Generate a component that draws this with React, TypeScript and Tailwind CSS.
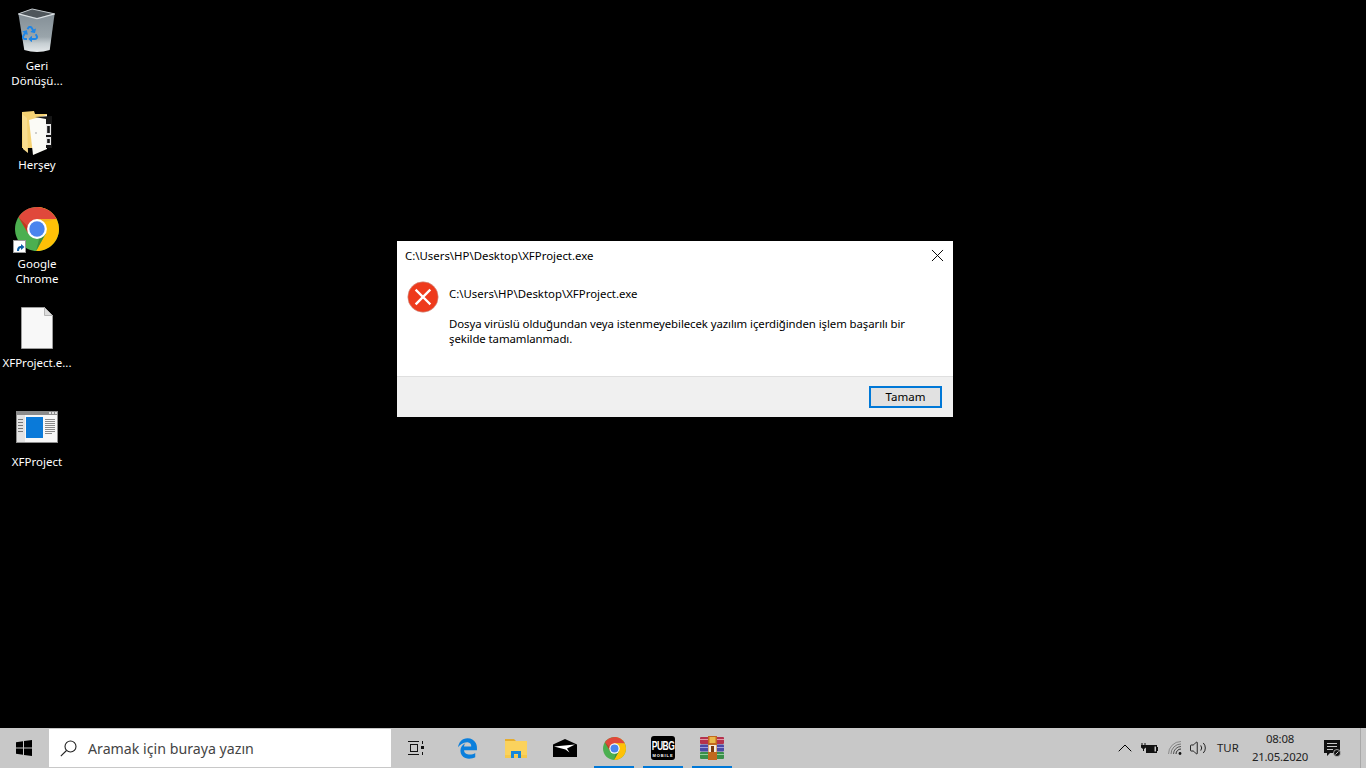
import React from "react";
import { FaRecycle } from "react-icons/fa";
import { FaEdgeLegacy } from "react-icons/fa6";
import { ChevronUp, Volume2, X } from "lucide-react";

const font = "font-['Noto_Sans','Liberation_Sans',sans-serif]";

function RecycleBin() {
  return (
    <div className="relative w-[40px] h-[45px] -mt-[1px]">
      <svg viewBox="0 0 40 46" className="absolute inset-0 w-full h-full">
        <defs>
          <linearGradient id="bin" x1="0" y1="0" x2="0" y2="1">
            <stop offset="0" stopColor="#7f8a92" />
            <stop offset="0.65" stopColor="#9aa5ab" />
            <stop offset="0.8" stopColor="#c6ced2" />
            <stop offset="1" stopColor="#e4e8ea" />
          </linearGradient>
        </defs>
        <path d="M1 6 L15 1 L38 6 L33 43 Q20 47 7 43 Z" fill="url(#bin)" />
        <path d="M1 6 L15 1 L38 6 L20 10 Z" fill="#4f565b" />
        <path d="M1 6 L20 11 L38 6" fill="none" stroke="#dfe4e7" strokeWidth="1.2" />
        <path d="M1 6 L15 1 L38 6" fill="none" stroke="#c3c9cd" strokeWidth="1" />
      </svg>
      <FaRecycle className="absolute left-[5px] top-[18px] text-[#1f86e6]" size={16} />
    </div>
  );
}

function FolderIcon() {
  return (
    <svg viewBox="0 0 32 46" className="w-[32px] h-[46px]">
      <path d="M1 2 L13 1 L14 4 L26 4 L26 38 L1 38 Z" fill="#f5d273" />
      <path d="M1 4 L6 8 L7 43 L2 39 Z" fill="#f9dd8f" />
      <path d="M8 10 L26 5 L26 39 L12 45 Z" fill="#fbfbf6" />
      <path d="M14 7 L31 6 L31 38 L25 38 L25 9 Z" fill="#161616" />
      <rect x="25" y="14" width="5" height="11" fill="#e8e8e8" />
      <rect x="26.2" y="16" width="2.6" height="7" fill="#161616" />
      <rect x="25" y="27" width="5" height="8" fill="#e8e8e8" />
      <rect x="26.2" y="29" width="2.6" height="4" fill="#161616" />
      <circle cx="15" cy="23" r="0.8" fill="#999" />
    </svg>
  );
}

function ChromeIcon({ size }: { size: number }) {
  return (
    <svg viewBox="4 4 40 40" width={size} height={size}>
      <path fill="#4caf50" d="M44,24c0,11.045-8.955,20-20,20S4,35.045,4,24S12.955,4,24,4S44,12.955,44,24z" />
      <path fill="#ffc107" d="M24,4v20l8,4l-8.843,16c0.317,0,0.526,0,0.843,0c11.053,0,20-8.947,20-20S35.053,4,24,4z" />
      <path fill="#e0483b" d="M41.84,15H24v13l-3-1L7.16,13.26H7.14C10.68,7.69,16.91,4,24,4C31.8,4,38.55,8.48,41.84,15z" />
      <path fill="#c9341f" d="M7.158,13.264l8.843,14.862L21,27L7.158,13.264z" />
      <path fill="#3f8f3a" d="M23.157,44l8.934-16.059L28,25L23.157,44z" />
      <path fill="#f2b01e" d="M41.865,15H24l-1.579,4.58L41.865,15z" />
      <circle cx="24" cy="24" r="9" fill="#fff" />
      <circle cx="24" cy="24" r="7" fill="#4a84ee" />
    </svg>
  );
}

function ChromeDesktop() {
  return (
    <div className="relative w-[44px] h-[44px]">
      <ChromeIcon size={44} />
      <div className="absolute left-[-2px] bottom-[-2px] w-[13px] h-[13px] bg-white border border-[#9a9a9a] flex items-center justify-center">
        <svg viewBox="0 0 10 10" className="w-[10px] h-[10px]">
          <path d="M2 9 C2 5 4 4 6 4 L6 2 L9.5 5 L6 8 L6 6 C5 6 4 7 4 9 Z" fill="#0c5fa8" />
        </svg>
      </div>
    </div>
  );
}

function FileIcon() {
  return (
    <svg viewBox="0 0 32 42" className="w-[32px] h-[42px]">
      <path d="M0.5 0.5 H23.5 L31.5 8.5 V41.5 H0.5 Z" fill="#f8f8f8" stroke="#9d9d9d" />
      <path d="M23.5 0.5 V8.5 H31.5 Z" fill="#dcdcdc" stroke="#b5b5b5" />
    </svg>
  );
}

function ExeIcon() {
  return (
    <svg viewBox="0 0 42 32" className="w-[42px] h-[32px]">
      <rect x="0.5" y="0.5" width="41" height="31" fill="#f7f7f7" stroke="#8f8f8f" />
      <rect x="0" y="0" width="42" height="4" fill="#8b8b8b" />
      <rect x="33" y="1" width="2" height="2" fill="#ddd" />
      <rect x="36" y="1" width="2" height="2" fill="#ddd" />
      <rect x="39" y="1" width="2" height="2" fill="#ddd" />
      <rect x="1" y="4" width="8" height="27" fill="#e3e3e3" />
      <rect x="10" y="6" width="17" height="21" fill="#0a7ad9" />
      {[8, 11, 14, 17, 20].map((y) => (
        <rect key={y} x="2" y={y} width="5" height="1" fill="#777" />
      ))}
      {[8, 10, 12, 14, 16, 18, 20, 22].map((y) => (
        <rect key={y} x="29" y={y} width={y === 22 ? 7 : 10} height="1" fill="#8a8a8a" />
      ))}
    </svg>
  );
}

function DesktopItem({ label, icon, iconClass }: { label: React.ReactNode; icon: React.ReactNode; iconClass: string }) {
  return (
    <div className="h-[99px] w-[74px] flex flex-col items-center">
      <div className={`h-[49px] w-full flex justify-center ${iconClass}`}>{icon}</div>
      <div className="text-white text-[11.5px] leading-[15px] text-center whitespace-nowrap [text-shadow:0_1px_2px_#000]">{label}</div>
    </div>
  );
}

function ErrorIcon() {
  return (
    <svg viewBox="0 0 32 32" className="w-[32px] h-[32px]">
      <circle cx="16" cy="16" r="15.2" fill="#ee3a1c" stroke="#c9a198" strokeWidth="0.6" />
      <path d="M9.5 9.5 L22.5 22.5 M22.5 9.5 L9.5 22.5" stroke="#fff" strokeWidth="2.4" strokeLinecap="square" />
    </svg>
  );
}

function Dialog() {
  return (
    <div className="absolute left-[397px] top-[241px] w-[556px] h-[176px] bg-white flex flex-col text-[11.4px] leading-[15px] text-black">
      <div className="h-[29px] flex items-center justify-between pl-[8px] pr-[5px]">
        <span>C:\Users\HP\Desktop\XFProject.exe</span>
        <X size={21} strokeWidth={1.1} className="text-black" />
      </div>
      <div className="flex-1 flex pl-[10px] pt-[11px] gap-[10px]">
        <ErrorIcon />
        <div className="pt-[5px] whitespace-nowrap">
          <div>C:\Users\HP\Desktop\XFProject.exe</div>
          <div className="mt-[15px] tracking-[-0.08px]">
            Dosya virüslü olduğundan veya istenmeyebilecek yazılım içerdiğinden işlem başarılı bir
            <br />
            şekilde tamamlanmadı.
          </div>
        </div>
      </div>
      <div className="h-[41px] bg-[#f0f0f0] border-t border-[#dfdfdf] flex justify-end items-start pt-[9px] pr-[11px]">
        <button className="w-[73px] h-[22px] bg-[#e1e1e1] border-2 border-[#0078d7] text-[11.5px] leading-[16px] text-black">Tamam</button>
      </div>
    </div>
  );
}

function Underlined({ active, children }: { active?: boolean; children: React.ReactNode }) {
  return (
    <div className="relative w-[40px] h-[40px] flex items-center justify-center">
      {children}
      {active && <div className="absolute left-0 right-0 bottom-0 h-[2px] bg-[#0078d7]" />}
    </div>
  );
}

function TaskView() {
  return (
    <svg viewBox="0 0 16 16" className="w-[16px] h-[16px]" fill="none" stroke="#111" strokeWidth="1">
      <path d="M0 1.5 H11 M0 14.5 H11" />
      <rect x="2.5" y="4.5" width="7" height="7" />
      <path d="M14.5 1 V4 M14.5 12 V15" />
      <rect x="13" y="6" width="3" height="3" fill="#111" stroke="none" />
    </svg>
  );
}

function Explorer() {
  return (
    <svg viewBox="0 0 22 20" className="w-[22px] h-[20px]">
      <path d="M0 1 H9 L11 3 H10 L8 5 H0 Z" fill="#e6ad2e" />
      <rect x="0" y="3" width="22" height="17" fill="#fbd25d" />
      <rect x="0" y="17" width="22" height="3" fill="#f6c84a" />
      <path d="M6 20 V13 H16 V20 H13 V16 H9 V20 Z" fill="#1686d9" />
    </svg>
  );
}

function Mail() {
  return (
    <svg viewBox="0 0 24 18" className="w-[24px] h-[18px]">
      <path d="M0 5.5 L12 0 L24 5.5 L24 18 L0 18 Z" fill="#000" />
      <path d="M1 7.5 L22 5.5 L14 9.5 L16.5 13.5 L12.5 10.5 Z" fill="#fff" />
    </svg>
  );
}

function Pubg() {
  return (
    <div className="w-[24px] h-[24px] bg-black rounded-[3px] flex flex-col items-center text-white overflow-hidden pt-[3px]">
      <span className="text-[8.5px] leading-[9px] font-bold font-['Liberation_Sans',sans-serif] tracking-[-0.5px] scale-y-[1.6] origin-top">PUBG</span>
      <span className="text-[4px] leading-[4px] mt-[6px] tracking-[0.9px] font-bold font-['Liberation_Sans',sans-serif]">MOBILE</span>
    </div>
  );
}

function WinRar() {
  return (
    <svg viewBox="0 0 24 24" className="w-[24px] h-[24px]">
      <rect x="0" y="1" width="24" height="7" rx="1" fill="#b5324d" />
      <rect x="0" y="8.5" width="24" height="7" rx="1" fill="#4b49a6" />
      <rect x="0" y="16" width="24" height="7" rx="1" fill="#3a8f4a" />
      <rect x="0" y="3" width="24" height="1" fill="#e29aa8" />
      <rect x="0" y="11" width="24" height="1" fill="#9d9be0" />
      <rect x="0" y="18" width="24" height="1" fill="#93cf9d" />
      <rect x="8" y="0" width="9" height="24" fill="#c2691f" />
      <rect x="9.5" y="1" width="6" height="6" fill="#e9b84a" />
      <rect x="8.5" y="9" width="8" height="7" fill="#f2ede0" />
      <rect x="11" y="10" width="3" height="6" fill="#7a3a10" />
    </svg>
  );
}

function Battery() {
  return (
    <svg viewBox="0 0 17 12" className="w-[17px] h-[12px]">
      <path d="M1 1 V3 M4 1 V3" stroke="#111" strokeWidth="1" />
      <path d="M0 3 H5 V5.5 L3 7 V9 H2 V7 L0 5.5 Z" fill="#111" />
      <rect x="5" y="3" width="11" height="8" fill="#111" />
      <rect x="16" y="5" width="1" height="4" fill="#111" />
      <rect x="13.5" y="4.5" width="1.5" height="5" fill="#c8c8c8" />
    </svg>
  );
}

function WifiNo() {
  return (
    <svg viewBox="0 0 14 14" className="w-[14px] h-[14px]" fill="none" strokeWidth="1">
      <path d="M0.5 13 A12.5 12.5 0 0 1 13 0.5" stroke="#8a8a8a" />
      <path d="M3 13 A10 10 0 0 1 13 3" stroke="#777" />
      <path d="M5.5 13 A7.5 7.5 0 0 1 13 5.5" stroke="#555" />
      <path d="M8 13 A5 5 0 0 1 13 8" stroke="#333" />
      <circle cx="12" cy="12.5" r="1.4" fill="#111" />
    </svg>
  );
}

function Notification() {
  return (
    <svg viewBox="0 0 17 17" className="w-[17px] h-[17px]">
      <path d="M0 0 H16 V13 H6 L3 16 V13 H0 Z" fill="#111" />
      <path d="M3 3.5 H13 M3 6.5 H13 M3 9.5 H9" stroke="#c8c8c8" strokeWidth="1" />
      <circle cx="13" cy="13" r="3.5" fill="#111" stroke="#c8c8c8" strokeWidth="0.8" />
      <path d="M11.5 14.5 L14.5 11.5" stroke="#c8c8c8" strokeWidth="1" />
    </svg>
  );
}

function Taskbar() {
  return (
    <div className="h-[40px] bg-[#c8c8c8] flex items-stretch text-black">
      <div className="w-[49px] flex items-center justify-center -translate-x-[1px]">
        <svg viewBox="0 0 16 16" className="w-[16px] h-[16px]">
          <path d="M0 2.3 L7 1.3 V7.5 H0 Z M8 1.1 L16 0 V7.5 H8 Z M0 8.5 H7 V14.7 L0 13.7 Z M8 8.5 H16 V16 L8 14.9 Z" fill="#000" />
        </svg>
      </div>
      <div className="w-[342px] my-[1px] bg-white flex items-center pl-[11px]">
        <svg viewBox="0 0 17 17" className="w-[17px] h-[17px]" fill="none" stroke="#222" strokeWidth="1.1">
          <circle cx="10.5" cy="6.5" r="5.5" />
          <path d="M6.5 10.5 L0.8 16.2" />
        </svg>
        <span className="ml-[11px] pt-[1px] text-[14.2px] text-[#444]">Aramak için buraya yazın</span>
      </div>
      <div className="w-[50px] flex items-center pl-[17px]"><TaskView /></div>
      <div className="flex gap-[9px] ml-[6px]">
        <Underlined><FaEdgeLegacy size={21} className="text-[#0b7fdc]" /></Underlined>
        <Underlined><Explorer /></Underlined>
        <Underlined><Mail /></Underlined>
        <Underlined active><ChromeIcon size={23} /></Underlined>
        <Underlined active><Pubg /></Underlined>
        <Underlined active><WinRar /></Underlined>
      </div>
      <div className="flex-1" />
      <div className="flex items-center text-[11.4px]">
        <ChevronUp size={24} strokeWidth={1} />
        <div className="ml-[4px]"><Battery /></div>
        <div className="ml-[10px]"><WifiNo /></div>
        <Volume2 size={18} strokeWidth={1.1} className="ml-[7px]" />
        <span className="ml-[10px] w-[24px] text-[#222]">TUR</span>
        <div className="ml-[9px] w-[60px] flex flex-col items-center leading-[18px] text-[#222] tracking-[-0.2px]">
          <span>08:08</span>
          <span>21.05.2020</span>
        </div>
        <div className="ml-[14px]"><Notification /></div>
        <div className="ml-[19px] w-[1px] h-full bg-[#a8a8a8]" />
        <div className="w-[5px]" />
      </div>
    </div>
  );
}

export default function App() {
  return (
    <div className={`w-[1366px] h-[768px] bg-black flex flex-col overflow-hidden ${font}`}>
      <div className="relative flex-1">
        <div className="flex flex-col pt-[9px]">
          <DesktopItem iconClass="" icon={<RecycleBin />} label={<>Geri<br />Dönüşü...</>} />
          <DesktopItem iconClass="pt-[2px]" icon={<FolderIcon />} label="Herşey" />
          <DesktopItem iconClass="" icon={<ChromeDesktop />} label={<>Google<br />Chrome</>} />
          <DesktopItem iconClass="pt-[1px]" icon={<FileIcon />} label="XFProject.e..." />
          <DesktopItem iconClass="pt-[6px]" icon={<ExeIcon />} label="XFProject" />
        </div>
        <Dialog />
      </div>
      <Taskbar />
    </div>
  );
}
